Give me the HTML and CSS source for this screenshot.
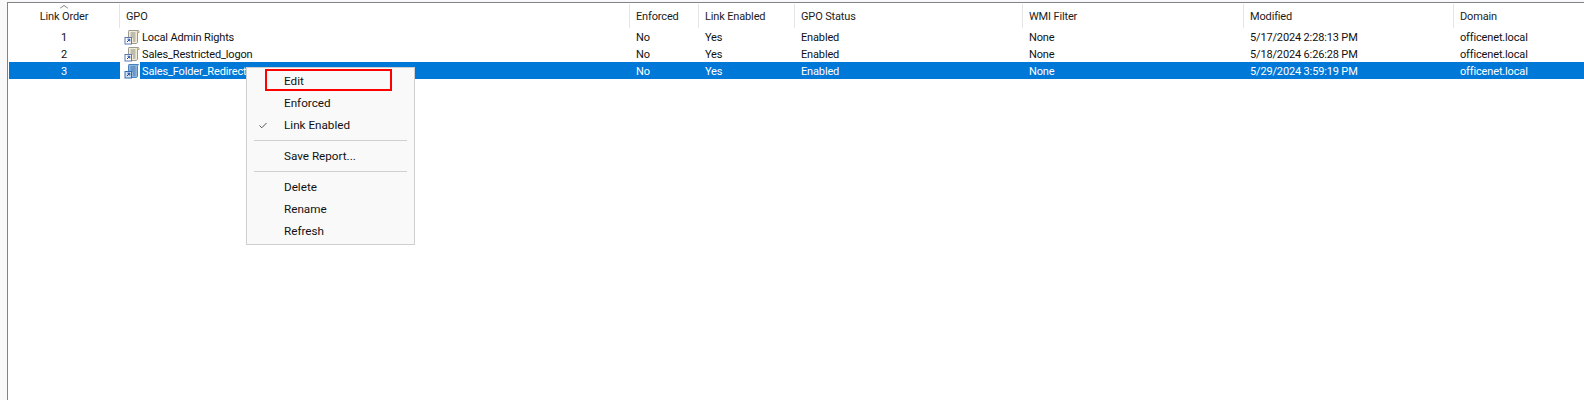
FILE: index.html
```html
<!DOCTYPE html>
<html lang="en">
<head>
    <meta charset="UTF-8">
    <title>Linked Group Policy Objects</title>
    <link rel="stylesheet" href="styles.css">
</head>
<body>
    <svg class="defs" width="0" height="0">
        <symbol id="gpo" viewBox="0 0 16 16">
            <path d="M5 1.500h9.500c-.8.6-1 1.200-1 2V13c0 1-.7 1.500-1.500 1.500H4.500V3C4.500 2.200 4.500 1.500 5 1.500z" fill="#f1ecd6" stroke="#9a9a90"/>
            <path d="M6.500 4h5M6.500 6h5M6.500 8h5M9 10h2.500M9 12h2.500" stroke="#8c8c84" fill="none"/>
            <path d="M13.500 3.500h1.500V2" fill="none" stroke="#b3a56c"/>
            <rect x="1" y="8.500" width="6.500" height="6.500" fill="#fff" stroke="#5a78b4"/>
            <path d="M3 13l2.300-2.300M3.500 10.200h2.300v2.300" fill="none" stroke="#1d3fa0"/>
        </symbol>
        <symbol id="gpo-selected" viewBox="0 0 16 16">
            <path d="M5 1.500h9.500c-.8.6-1 1.200-1 2V13c0 1-.7 1.500-1.500 1.500H4.500V3C4.500 2.200 4.500 1.500 5 1.500z" fill="#8fb4da" stroke="#4a82bc"/>
            <path d="M6.500 4h5M6.500 6h5M6.500 8h5M9 10h2.500M9 12h2.500" stroke="#3f7ab6" fill="none"/>
            <rect x="1" y="8.500" width="6.500" height="6.500" fill="#cfe0f2" stroke="#2f6cb0"/>
            <path d="M3 13l2.300-2.300M3.500 10.200h2.300v2.300" fill="none" stroke="#123f96"/>
        </symbol>
    </svg>

    <div class="panel">
        <div class="row head">
            <div class="col order"><span class="sort"></span>Link Order</div>
            <div class="col">GPO</div>
            <div class="col">Enforced</div>
            <div class="col">Link Enabled</div>
            <div class="col">GPO Status</div>
            <div class="col">WMI Filter</div>
            <div class="col">Modified</div>
            <div class="col">Domain</div>
        </div>

        <div class="row item">
            <div class="cell order">1</div>
            <div class="cell name"><svg class="icon"><use href="#gpo"/></svg><span>Local Admin Rights</span></div>
            <div class="cell">No</div>
            <div class="cell">Yes</div>
            <div class="cell">Enabled</div>
            <div class="cell">None</div>
            <div class="cell">5/17/2024 2:28:13 PM</div>
            <div class="cell">officenet.local</div>
        </div>
        <div class="row item">
            <div class="cell order">2</div>
            <div class="cell name"><svg class="icon"><use href="#gpo"/></svg><span>Sales_Restricted_logon</span></div>
            <div class="cell">No</div>
            <div class="cell">Yes</div>
            <div class="cell">Enabled</div>
            <div class="cell">None</div>
            <div class="cell">5/18/2024 6:26:28 PM</div>
            <div class="cell">officenet.local</div>
        </div>
        <div class="row item selected">
            <div class="cell order">3</div>
            <div class="cell name"><svg class="icon"><use href="#gpo-selected"/></svg><span>Sales_Folder_Redirection</span></div>
            <div class="cell">No</div>
            <div class="cell">Yes</div>
            <div class="cell">Enabled</div>
            <div class="cell">None</div>
            <div class="cell">5/29/2024 3:59:19 PM</div>
            <div class="cell">officenet.local</div>
        </div>

        <div class="menu">
            <div class="menu-item">Edit</div>
            <div class="menu-item">Enforced</div>
            <div class="menu-item"><svg class="check" width="8" height="7" viewBox="0 0 8 7"><path d="M.5 3.500l2.300 2.300L7.500 1" fill="none" stroke="#555"/></svg>Link Enabled</div>
            <div class="menu-sep"></div>
            <div class="menu-item">Save Report...</div>
            <div class="menu-sep"></div>
            <div class="menu-item">Delete</div>
            <div class="menu-item">Rename</div>
            <div class="menu-item">Refresh</div>
            <div class="callout"></div>
        </div>
    </div>
</body>
</html>
```

FILE: styles.css
```css
* {
    box-sizing: border-box;
}
html, body {
    margin: 0;
    height: 100%;
    overflow: hidden;
}
body {
    background: #f9f9f9;
    padding: 2px 0 0 7px;
    font-family: Roboto, "Open Sans", Arial, sans-serif;
    font-size: 11px;
    color: #111;
}
.defs {
    position: absolute;
}
.panel {
    position: relative;
    height: 100%;
    background: #fff;
    border-top: 1px solid #82828a;
    border-left: 1px solid #82828a;
}
.row {
    display: grid;
    grid-template-columns: 111px 510px 69px 96px 228px 221px 210px 1fr;
    margin-left: 1px;
    letter-spacing: -.15px;
}
.head {
    height: 24px;
    margin-top: 1px;
    color: #1c1c1c;
}
.col {
    position: relative;
    display: flex;
    align-items: center;
    padding-left: 6px;
    border-right: 1px solid #e5e5e5;
}
.col:last-child {
    border-right: none;
}
.col.order {
    justify-content: center;
    padding-left: 0;
}
.sort {
    position: absolute;
    top: 0;
    left: 50%;
    width: 6px;
    height: 6px;
    margin-left: -3px;
    margin-top: 1px;
    border-top: 1px solid #8a8a8a;
    border-left: 1px solid #8a8a8a;
    transform: scaleY(.7) rotate(45deg);
}
.item {
    grid-auto-rows: 17px;
    line-height: 19px;
}
.cell {
    padding-left: 6px;
    white-space: nowrap;
}
.cell.order {
    padding-left: 0;
    text-align: center;
    padding-right: 1px;
}
.cell.name {
    display: flex;
    padding-left: 4px;
}
.cell.name span {
    padding: 0 2px;
}
.icon {
    width: 16px;
    height: 16px;
    flex: none;
    margin-top: 1px;
}
.selected {
    background: #0078d7;
    color: #fff;
}
.selected .name {
    background: linear-gradient(to right, #fff 20px, #0078d7 20px);
}
.menu {
    position: absolute;
    left: 238px;
    top: 64px;
    width: 169px;
    height: 178px;
    padding: 2px 1px;
    background: #f9f9f9;
    border: 1px solid #cfcfcf;
    color: #111;
    font-size: 11.700px;
}
.menu-item {
    position: relative;
    height: 22px;
    line-height: 22px;
    padding-left: 36px;
}
.menu-sep {
    height: 1px;
    margin: 4px 6px;
    background: #cfcfcf;
}
.check {
    position: absolute;
    left: 11px;
    top: 8px;
}
.callout {
    position: absolute;
    left: 18px;
    top: 1px;
    width: 127px;
    height: 22px;
    border: 2px solid #f00;
}
```
